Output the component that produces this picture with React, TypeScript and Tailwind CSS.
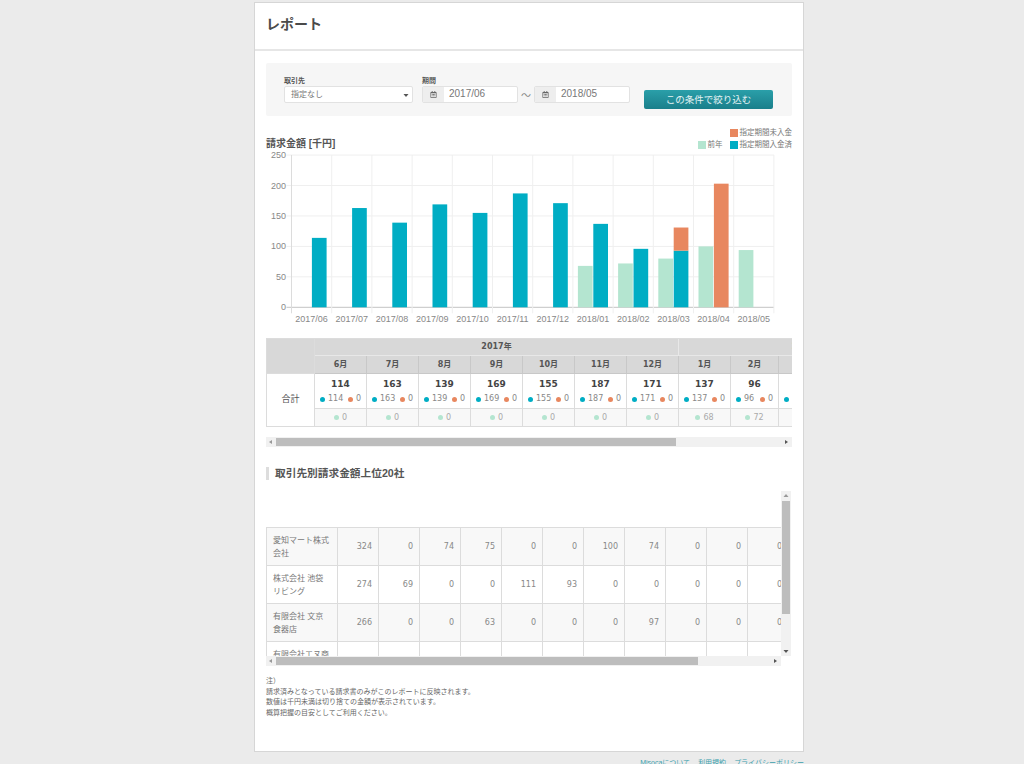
import React from "react";
import { FaRegCalendarAlt } from "react-icons/fa";

const sans = "font-['Liberation_Sans','Noto_Sans_CJK_JP',sans-serif]";
const TEAL = "#00adc4";
const LIGHT = "#b4e5d0";
const ORANGE = "#e8875f";

const cats = ["2017/06","2017/07","2017/08","2017/09","2017/10","2017/11","2017/12","2018/01","2018/02","2018/03","2018/04","2018/05"];
const paid = [114,163,139,169,155,187,171,137,96,93,0,0];
const unpaid = [0,0,0,0,0,0,0,0,0,38,203,0];
const prev = [0,0,0,0,0,0,0,68,72,80,100,94];
const months = ["6月","7月","8月","9月","10月","11月","12月","1月","2月","3月","4月","5月"];

function Chart() {
  const x0 = 25.5, step = 40.2, y0 = 156.3, k = 0.609, top = 4;
  const Y = (v: number) => y0 - v * k;
  return (
    <svg width="526" height="179" viewBox="0 0 526 179" className={`block ${sans}`}>
      {[0,50,100,150,200,250].map((v) => (
        <g key={v}>
          <line x1={x0 - 5} x2={508} y1={Y(v)} y2={Y(v)} stroke={v === 0 ? "#c4c4c4" : "#efefef"} />
          <text x={20} y={Y(v) + 3} textAnchor="end" fontSize="9" fill="#888">{v}</text>
        </g>
      ))}
      {Array.from({ length: 13 }).map((_, i) => (
        <line key={i} x1={x0 + step * i} x2={x0 + step * i} y1={top} y2={y0 + 6} stroke={i === 0 ? "#dcdcdc" : "#efefef"} />
      ))}
      {cats.map((c, i) => {
        const cx = x0 + step * i;
        const tx = cx + 20.4;
        const lx = cx + 5;
        return (
          <g key={c}>
            {prev[i] > 0 && <rect x={lx} y={Y(prev[i])} width={14.7} height={prev[i] * k} fill={LIGHT} />}
            {paid[i] > 0 && <rect x={tx} y={Y(paid[i])} width={14.7} height={paid[i] * k} fill={TEAL} />}
            {unpaid[i] > 0 && <rect x={tx} y={Y(paid[i] + unpaid[i])} width={14.7} height={unpaid[i] * k} fill={ORANGE} />}
            <text x={cx + 20.1} y={y0 + 15} textAnchor="middle" fontSize="9" fill="#888">{c}</text>
          </g>
        );
      })}
    </svg>
  );
}

function Tri({ dir }: { dir: "l" | "r" | "u" | "d" }) {
  const pts = { l: "4,1 1,3 4,5", r: "1,1 4,3 1,5", u: "0.5,4 3,1 5.5,4", d: "0.5,2 3,5 5.5,2" }[dir];
  return (
    <svg width="6" height="6" viewBox="0 0 6 6" className="block shrink-0">
      <polygon points={pts} fill={dir === "d" || dir === "r" ? "#555" : "#999"} />
    </svg>
  );
}

function HScroll({ thumb }: { thumb: string }) {
  return (
    <div className="flex h-[10px] items-center bg-[#f1f1f1]">
      <div className="flex w-[10px] shrink-0 justify-center"><Tri dir="l" /></div>
      <div className={`h-[8px] bg-[#bdbdbd] ${thumb}`} />
      <div className="flex-1" />
      <div className="flex w-[10px] shrink-0 justify-center"><Tri dir="r" /></div>
    </div>
  );
}

function Dot({ c }: { c: string }) {
  return <span className="inline-block h-[5px] w-[5px] rounded-full" style={{ background: c }} />;
}

function SummaryTable() {
  const cell = "border-r border-b border-[#dcdcdc]";
  return (
    <div className="overflow-hidden border-t border-l border-[#dcdcdc]">
      <div className="grid w-max grid-cols-[48px_repeat(8,52px)_48px_52px_52px_52px] grid-rows-[17px_18px_35px_18px] font-['DejaVu_Sans','Noto_Sans_CJK_JP',sans-serif] text-[8px] text-[#666]">
        <div className={`${cell} row-span-2 bg-[#d8d8d8]`} />
        <div className="col-span-7 flex items-center justify-center border-r border-b border-[#e8e8e8] bg-[#d8d8d8] font-bold text-[#555]">2017年</div>
        <div className="col-span-5 flex items-center justify-center border-b border-[#e8e8e8] bg-[#d8d8d8] font-bold text-[#555]">2018年</div>
        {months.map((m) => (
          <div key={m} className="flex items-center justify-center border-r border-b border-[#c8c8c8] bg-[#d8d8d8] font-bold text-[#555]">{m}</div>
        ))}
        <div className={`${cell} row-span-2 flex items-center justify-center font-['Liberation_Sans','Noto_Sans_CJK_JP',sans-serif] text-[9px] text-[#555]`}>合計</div>
        {cats.map((c, i) => (
          <div key={c} className={`${cell} flex flex-col items-center justify-center`}>
            <div className="text-[9px] font-bold leading-[14px] text-[#444]">{paid[i] + unpaid[i]}</div>
            <div className="mt-[2px] flex w-full items-center justify-between px-[5px] leading-[12px] text-[#888]">
              <span className="flex items-center gap-[3px]"><Dot c={TEAL} />{paid[i]}</span>
              <span className="flex items-center gap-[3px]"><Dot c={ORANGE} />{unpaid[i]}</span>
            </div>
          </div>
        ))}
        {cats.map((c, i) => (
          <div key={c} className={`${cell} flex items-center justify-center gap-[3px] bg-[#f8f8f8] text-[#aaa]`}>
            <Dot c={LIGHT} />{prev[i]}
          </div>
        ))}
      </div>
    </div>
  );
}

const rows: [string, number[]][] = [
  ["愛知マート株式会社", [324,0,74,75,0,0,100,74,0,0,0,0]],
  ["株式会社 池袋リビング", [274,69,0,0,111,93,0,0,0,0,0,0]],
  ["有限会社 文京食器店", [266,0,0,63,0,0,0,97,0,0,0,0]],
  ["有限会社エヌ商事", [240,0,0,0,0,0,0,0,0,0,0,0]],
];

function RankTable() {
  return (
    <div className="flex">
      <div className="w-[515px]">
        <div className="h-[165px] overflow-hidden pt-[36px]">
          <div className="grid w-max grid-cols-[71px_repeat(12,41px)] auto-rows-[38px] border-t border-l border-[#dcdcdc] font-['DejaVu_Sans','Noto_Sans_CJK_JP',sans-serif] text-[8px] text-[#888]">
            {rows.map(([name, vals], r) => (
              <React.Fragment key={name}>
                <div className={`flex items-center border-r border-b border-[#dcdcdc] px-[6px] font-['Liberation_Sans','Noto_Sans_CJK_JP',sans-serif] text-[8px] leading-[13px] text-[#777] ${r % 2 === 0 ? "bg-[#f8f8f8]" : "bg-white"}`}>{name}</div>
                {vals.map((v, i) => (
                  <div key={i} className={`flex items-center justify-end border-r border-b border-[#dcdcdc] pr-[6px] ${r % 2 === 0 ? "bg-[#f8f8f8]" : "bg-white"}`}>{v}</div>
                ))}
              </React.Fragment>
            ))}
          </div>
        </div>
        <HScroll thumb="w-[422px]" />
      </div>
      <div className="flex h-[165px] w-[10px] flex-col items-center bg-[#f1f1f1]">
        <div className="flex h-[10px] items-center"><Tri dir="u" /></div>
        <div className="h-[113px] w-[8px] bg-[#bdbdbd]" />
        <div className="flex-1" />
        <div className="flex h-[10px] items-center"><Tri dir="d" /></div>
      </div>
    </div>
  );
}

function DateField({ value }: { value: string }) {
  return (
    <div className="flex h-[17px] w-[96px] overflow-hidden rounded-[2px] border border-[#e2e2e2] bg-white">
      <div className="flex w-[21px] items-center justify-center bg-[#eeeeee] text-[#666]">
        <FaRegCalendarAlt size={7} />
      </div>
      <div className="pl-[5px] text-[10px] leading-[14px] text-[#777]">{value}</div>
    </div>
  );
}

export default function App() {
  return (
    <div className={`flex h-[764px] flex-col items-center overflow-hidden bg-[#ebebeb] pl-[34px] pt-[2px] ${sans}`}>
      <div className="h-[750px] w-[550px] shrink-0 border border-[#d6d6d6] bg-white">
        <div className="flex h-[48px] items-center border-b-2 border-[#e6e6e6] pb-[3px] pl-[11px] text-[14px] font-bold text-[#4a4a4a]">レポート</div>

        <div className="px-[11px] pt-[12px]">
          <div className="flex h-[53px] items-start rounded-[2px] bg-[#f6f6f6] pl-[18px]">
            <div className="mt-[13px] w-[138px]">
              <div className="text-[7px] font-bold leading-[9px] text-[#555]">取引先</div>
              <div className="mt-[1px] flex h-[17px] w-[129px] items-center justify-between rounded-[2px] border border-[#e2e2e2] bg-white pl-[6px] pr-[3px] text-[8px] text-[#777]">
                指定なし<Tri dir="d" />
              </div>
            </div>
            <div className="mt-[13px]">
              <div className="text-[7px] font-bold leading-[9px] text-[#555]">期間</div>
              <div className="mt-[1px] flex items-center">
                <DateField value="2017/06" />
                <span className="w-[16px] pt-[2px] text-center text-[10px] text-[#888]">～</span>
                <DateField value="2018/05" />
              </div>
            </div>
            <button className="ml-[14px] mt-[27px] h-[19px] w-[129px] rounded-[2px] bg-gradient-to-b from-[#2a9fa9] to-[#1a7f8b] text-[9.5px] leading-[19px] text-[#e4f3f4]">この条件で絞り込む</button>
          </div>

          <div className="mt-[10px] flex h-[25px] items-end justify-between">
            <div className="pb-[1px] text-[10px] font-bold leading-[12px] text-[#555]">請求金額 [千円]</div>
            <div className="flex flex-col items-end gap-[3px] pb-[2px] text-[7.5px] leading-[9px] text-[#777]">
              <div className="flex items-center gap-[2px]"><span className="h-[8px] w-[8px] bg-[#e8875f]" />指定期間未入金</div>
              <div className="flex items-center gap-[7px]">
                <div className="flex items-center gap-[2px]"><span className="h-[8px] w-[8px] bg-[#b4e5d0]" />前年</div>
                <div className="flex items-center gap-[2px]"><span className="h-[8px] w-[8px] bg-[#00adc4]" />指定期間入金済</div>
              </div>
            </div>
          </div>
          <Chart />

          <div className="mt-[8px]"><SummaryTable /></div>
          <div className="mt-[10px]"><HScroll thumb="w-[400px]" /></div>

          <div className="mt-[20px] flex h-[13px] items-center border-l-[3px] border-[#dddddd] pl-[6px] text-[10.7px] font-bold text-[#555]">取引先別請求金額上位20社</div>

          <div className="mt-[11px]"><RankTable /></div>

          <div className="mt-[10px] text-[7px] leading-[10.6px] text-[#666]">
            <div>注）</div>
            <div>請求済みとなっている請求書のみがこのレポートに反映されます。</div>
            <div>数値は千円未満は切り捨ての金額が表示されています。</div>
            <div>概算把握の目安としてご利用ください。</div>
          </div>
        </div>
      </div>
      <div className="flex w-[550px] shrink-0 justify-end gap-[8px] pt-[5px] text-[7px] leading-[12px] text-[#3aa0ad]">
        <span>Misocaについて</span><span>利用規約</span><span>プライバシーポリシー</span>
      </div>
    </div>
  );
}
